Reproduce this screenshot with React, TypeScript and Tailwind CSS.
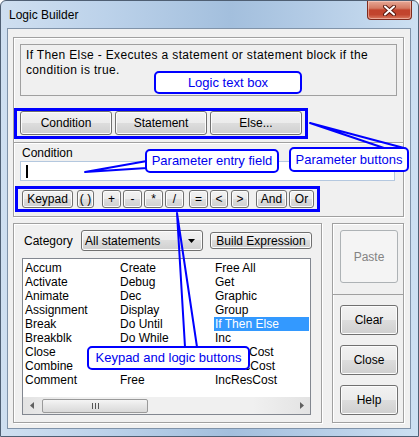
import type { ReactNode } from 'react';

const btnBase =
  'flex items-center rounded-[3px] border border-[#707070] bg-[linear-gradient(#f2f2f2_0%,#ebebeb_49%,#dddddd_50%,#cfcfcf_100%)] shadow-[inset_0_0_0_1px_#fcfcfc] text-black';

const Btn = ({ children, className }: { children: ReactNode; className: string }) => (
  <div className={`${btnBase} justify-center ${className}`}>{children}</div>
);

const Callout = ({ children, className }: { children: ReactNode; className: string }) => (
  <div
    className={`absolute flex items-center justify-center rounded-[5px] border-2 border-[#0000ff] bg-white text-[13px] text-[#0000ee] ${className}`}
  >
    {children}
  </div>
);

const columns = [
  ['Accum', 'Activate', 'Animate', 'Assignment', 'Break', 'Breakblk', 'Close', 'Combine', 'Comment'],
  ['Create', 'Debug', 'Dec', 'Display', 'Do Until', 'Do While', '', '', 'Free'],
  ['Free All', 'Get', 'Graphic', 'Group', 'If Then Else', 'Inc', 'IncEntCost', 'IncLocCost', 'IncResCost'],
  ['Insert', 'Join', 'Jump', 'Load', 'Log', 'Match', 'Move', 'Next', 'Order'],
];

const etched = 'border border-[#a0a0a0] shadow-[inset_1px_1px_0_#ffffff,1px_1px_0_#ffffff]';

export default function App() {
  return (
    <div className="relative h-[437px] w-[419px] font-['Liberation_Sans',sans-serif] text-[12px] text-black">
      {/* window frame */}
      <div className="flex h-full w-full flex-col rounded-t-[6px] border border-[#4f5f73] bg-[linear-gradient(90deg,#cfdff0_0%,#bcd2ea_25%,#a3bfdd_55%,#b4cce6_75%,#cde0f2_100%)]">
        {/* title bar */}
        <div className="flex h-[27px] shrink-0 items-start justify-between">
          <span className="mt-[7px] ml-[8px] leading-[15px] text-[12px] text-black">Logic Builder</span>
          <div className="mr-[6px] flex h-[19px] w-[45px] items-center justify-center rounded-b-[4px] border border-t-0 border-[#7e2a1d] bg-[linear-gradient(#e7a896_0%,#d47a63_40%,#c2432c_50%,#c2452e_75%,#da7a60_100%)] shadow-[inset_0_0_0_1px_rgba(255,220,210,0.5)]">
            <svg width="13" height="11" viewBox="0 0 13 11">
              <path
                d="M2 1.5 L11 9.5 M11 1.5 L2 9.5"
                stroke="#5a1a10"
                strokeWidth="4"
                strokeLinecap="round"
              />
              <path d="M2 1.5 L11 9.5 M11 1.5 L2 9.5" stroke="#ffffff" strokeWidth="2" strokeLinecap="round" />
            </svg>
          </div>
        </div>

        {/* client area */}
        <div className="mr-[7px] mb-[7px] ml-[6px] flex-1 border border-[#8093a9] bg-[#f0f0f0]">
          {/* top panel */}
          <div className={`mt-[8px] ml-[5px] flex h-[180px] w-[391px] flex-col ${etched}`}>
            <div className="mt-[6px] ml-[6px] h-[52px] w-[377px] border border-[#a0a0a0] px-[5px] pt-[3px] leading-[15px] tracking-[0.35px]">
              If Then Else - Executes a statement or statement block if the condition is true.
            </div>

            {/* parameter buttons */}
            <div className="mt-[12px] flex h-[31px] w-[294px] gap-[3px] border-[3px] border-[#0000ff] pl-[3px]">
              <Btn className="h-[24px] w-[92px]">Condition</Btn>
              <Btn className="h-[24px] w-[92px]">Statement</Btn>
              <Btn className="h-[24px] w-[92px]">Else...</Btn>
            </div>

            <div className="mt-[3px] h-px w-full bg-[#a0a0a0] shadow-[0_1px_0_#ffffff]" />

            <div className="mt-[3px] ml-[8px] h-[14px] leading-[14px]">Condition</div>
            <div className="mt-[1px] ml-[6px] flex h-[20px] w-[375px] items-center border border-[#b4c8df] bg-white pl-[5px]">
              <div className="h-[13px] w-[2px] bg-black" />
            </div>

            {/* keypad */}
            <div className="mt-[5px] ml-[1px] flex h-[26px] w-[305px] items-start border-[3px] border-[#0000ff] pt-[1px] pl-[4px]">
              <Btn className="h-[18px] w-[51px]">Keypad</Btn>
              <Btn className="ml-[4px] h-[18px] w-[17px]">( )</Btn>
              <Btn className="ml-[8px] h-[18px] w-[19px]">+</Btn>
              <Btn className="ml-[2px] h-[18px] w-[19px]">-</Btn>
              <Btn className="ml-[2px] h-[18px] w-[19px]">*</Btn>
              <Btn className="ml-[2px] h-[18px] w-[19px]">/</Btn>
              <Btn className="ml-[5px] h-[18px] w-[19px]">=</Btn>
              <Btn className="ml-[2px] h-[18px] w-[18px]">&lt;</Btn>
              <Btn className="ml-[3px] h-[18px] w-[18px]">&gt;</Btn>
              <Btn className="ml-[7px] h-[18px] w-[31px]">And</Btn>
              <Btn className="ml-[2px] h-[18px] w-[25px]">Or</Btn>
            </div>
          </div>

          {/* lower panels */}
          <div className="mt-[6px] ml-[5px] flex gap-[10px]">
            <div className={`flex h-[200px] w-[309px] flex-col ${etched}`}>
              <div className="mt-[6px] flex h-[21px] items-center pl-[10px]">
                <span className="w-[57px]">Category</span>
                <div className={`${btnBase} h-[21px] w-[122px] justify-between pr-[7px] pl-[3px]`}>
                  <span>All statements</span>
                  <svg width="7" height="4" viewBox="0 0 7 4">
                    <path d="M0 0 H7 L3.5 4 Z" fill="#000" />
                  </svg>
                </div>
                <Btn className="ml-[7px] h-[17px] w-[102px]">Build Expression</Btn>
              </div>

              {/* statement list */}
              <div className="mt-[7px] ml-[8px] flex h-[157px] w-[289px] flex-col border border-[#828790] bg-white">
                <div className="flex flex-1 overflow-hidden pt-[2px] pl-[1px]">
                  {columns.map((col, ci) => (
                    <div key={ci} className="flex w-[95px] shrink-0 flex-col overflow-hidden">
                      {col.map((item, ri) => (
                        <div
                          key={ri}
                          className={
                            item === 'If Then Else'
                              ? 'h-[14px] bg-[#3399ff] pl-[1px] leading-[14px] whitespace-nowrap text-white'
                              : 'h-[14px] pl-[1px] leading-[14px] whitespace-nowrap'
                          }
                        >
                          {item}
                        </div>
                      ))}
                    </div>
                  ))}
                </div>
                <div className="flex h-[17px] items-center bg-[linear-gradient(90deg,#e3e3e3,#f0f0f0_20%,#f0f0f0_80%,#e3e3e3)]">
                  <div className="flex w-[17px] justify-center">
                    <svg width="4" height="7" viewBox="0 0 4 7">
                      <path d="M4 0 V7 L0 3.5 Z" fill="#606060" />
                    </svg>
                  </div>
                  <div className="ml-[2px] flex h-[14px] w-[106px] items-center justify-center gap-[2px] rounded-[2px] border border-[#9a9a9a] bg-[linear-gradient(#f5f5f5,#e6e6e6_50%,#d9d9d9)]">
                    <div className="h-[6px] w-px bg-[#555]" />
                    <div className="h-[6px] w-px bg-[#555]" />
                    <div className="h-[6px] w-px bg-[#555]" />
                  </div>
                  <div className="flex-1" />
                  <div className="flex w-[17px] justify-center">
                    <svg width="4" height="7" viewBox="0 0 4 7">
                      <path d="M0 0 V7 L4 3.5 Z" fill="#606060" />
                    </svg>
                  </div>
                </div>
              </div>
            </div>

            <div className={`flex h-[200px] w-[72px] flex-col ${etched}`}>
              <div className="h-[71px] border-b border-[#a0a0a0] pt-[6px] pl-[7px]">
                <div className="flex h-[53px] w-[58px] items-center justify-center rounded-[3px] border border-[#adb2b5] bg-[#f4f4f4] text-[#838383]">
                  Paste
                </div>
              </div>
              <div className="flex flex-col gap-[10px] pt-[10px] pl-[7px]">
                <Btn className="h-[30px] w-[58px]">Clear</Btn>
                <Btn className="h-[30px] w-[58px]">Close</Btn>
                <Btn className="h-[30px] w-[58px]">Help</Btn>
              </div>
            </div>
          </div>
        </div>
      </div>

      {/* annotations */}
      <svg className="pointer-events-none absolute inset-0" width="419" height="437">
        <polygon points="147,161 85,172 147,168" fill="#ffffff" stroke="#0000ff" strokeWidth="2" strokeLinejoin="round" />
        <polyline points="384,148 310,123 404,148" fill="none" stroke="#0000ff" strokeWidth="2" strokeLinejoin="round" />
        <polyline points="185,347 177,213 197,347" fill="none" stroke="#0000ff" strokeWidth="2" strokeLinejoin="round" />
      </svg>
      <Callout className="top-[71px] left-[154px] h-[23px] w-[148px]">Logic text box</Callout>
      <Callout className="top-[149px] left-[145px] h-[24px] w-[134px]">Parameter entry field</Callout>
      <Callout className="top-[147px] left-[289px] h-[25px] w-[120px]">Parameter buttons</Callout>
      <Callout className="top-[346px] left-[87px] h-[24px] w-[163px]">Keypad and logic buttons</Callout>
    </div>
  );
}
